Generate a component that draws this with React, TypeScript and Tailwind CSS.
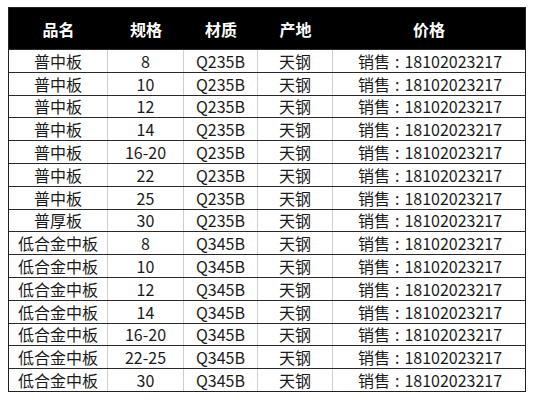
const rows: [string, string, string][] = [
  ['普中板', '8', 'Q235B'],
  ['普中板', '10', 'Q235B'],
  ['普中板', '12', 'Q235B'],
  ['普中板', '14', 'Q235B'],
  ['普中板', '16-20', 'Q235B'],
  ['普中板', '22', 'Q235B'],
  ['普中板', '25', 'Q235B'],
  ['普厚板', '30', 'Q235B'],
  ['低合金中板', '8', 'Q345B'],
  ['低合金中板', '10', 'Q345B'],
  ['低合金中板', '12', 'Q345B'],
  ['低合金中板', '14', 'Q345B'],
  ['低合金中板', '16-20', 'Q345B'],
  ['低合金中板', '22-25', 'Q345B'],
  ['低合金中板', '30', 'Q345B'],
];

const cols = 'grid grid-cols-[99px_76px_74px_75px_1fr]';

export default function App() {
  return (
    <div className="w-[533px] h-[400px] bg-white pt-[7px] pl-[8px] font-['Noto_Sans_CJK_SC','Noto_Sans',sans-serif] text-[16px] text-[#1a1a1a]">
      <div className="w-[518px] border border-[#222]">
        <div className={`${cols} h-[41px] bg-black text-white font-bold text-[16px]`}>
          {['品名', '规格', '材质', '产地', '价格'].map((h) => (
            <div key={h} className="flex items-center justify-center">{h}</div>
          ))}
        </div>
        <div className="grid grid-rows-[repeat(15,1fr)] h-[342px]">
          {rows.map(([name, size, mat], i) => (
            <div key={i} className={`${cols} border-t border-[#2a2a2a] leading-none`}>
              <div className="flex items-center justify-center border-r border-[#cfcfcf]">{name}</div>
              <div className="flex items-center justify-center border-r border-[#cfcfcf]">{size}</div>
              <div className="flex items-center justify-center border-r border-[#cfcfcf]">{mat}</div>
              <div className="flex items-center justify-center border-r border-[#cfcfcf]">天钢</div>
              <div className="flex items-center justify-center pl-[2px]">
                销售<span className="px-[5px]">:</span>18102023217
              </div>
            </div>
          ))}
        </div>
      </div>
    </div>
  );
}
